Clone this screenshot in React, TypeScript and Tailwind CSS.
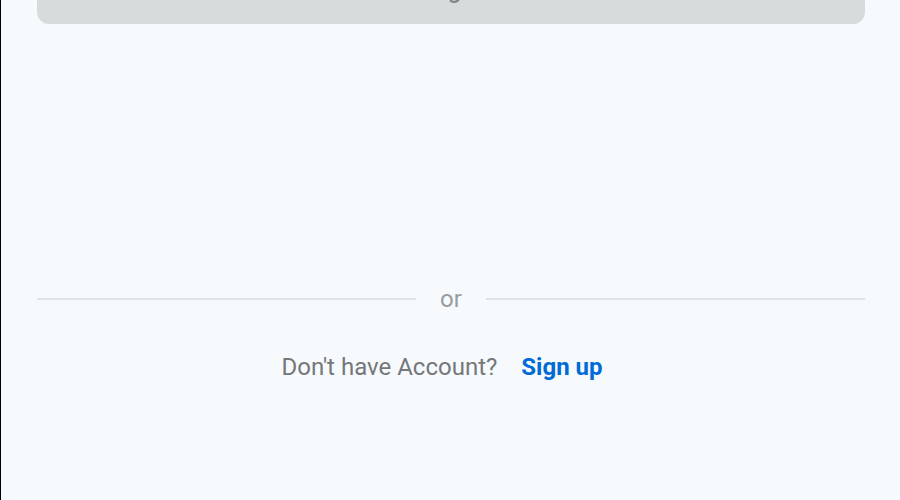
export default function App() {
  return (
    <main className="min-h-screen overflow-hidden border-l border-black bg-[#f6fafd] pr-[35px] pl-9 font-[Roboto,sans-serif] text-2xl">
      <form onSubmit={(event) => event.preventDefault()}>
        <button
          type="submit"
          disabled
          className="-mt-11 flex h-17 w-full items-center justify-center rounded-xl bg-[#d8dbdc] font-medium text-[#838688]"
        >
          Login
        </button>
      </form>

      <div className="mt-[259px] flex items-center gap-6 text-[#999c9e]">
        <span className="h-0.5 flex-1 bg-[#dfe3e5]" />
        <span>or</span>
        <span className="h-0.5 flex-1 bg-[#dfe3e5]" />
      </div>

      <p className="mt-9 mr-[18px] flex items-center justify-center gap-6 pb-12 text-[#757779]">
        <span>Don't have Account?</span>
        <a href="#signup" className="font-bold text-[#006bd6]">
          Sign up
        </a>
      </p>
    </main>
  );
}
